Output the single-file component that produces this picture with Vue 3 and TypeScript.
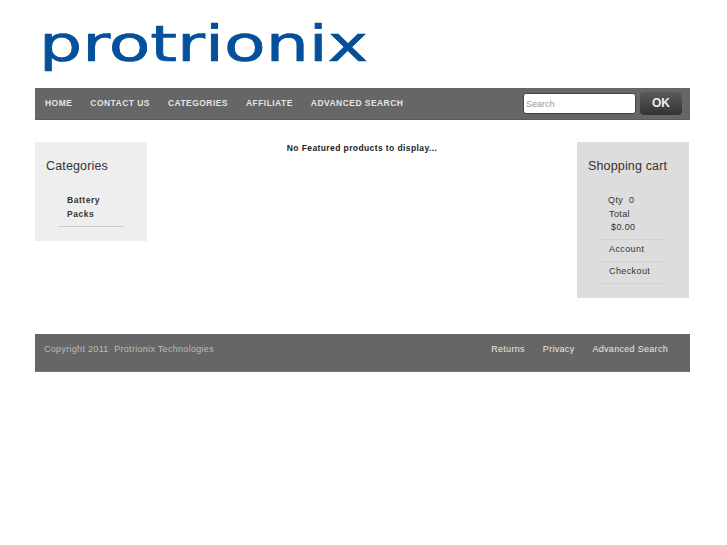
<script setup lang="ts">
const navLinks: string[] = ['HOME', 'CONTACT US', 'CATEGORIES', 'AFFILIATE', 'ADVANCED SEARCH']
const footerLinks: string[] = ['Returns', 'Privacy', 'Advanced Search']
</script>

<template>
  <div class="page">
    <header class="logo-row">
      <svg class="logo" width="345" height="60" viewBox="0 0 345 60" role="img" aria-label="protrionix">
        <text x="4" y="45" textLength="329" lengthAdjust="spacingAndGlyphs" class="logo-text">protrionix</text>
      </svg>
    </header>

    <nav class="nav">
      <ul class="nav-links">
        <li v-for="link in navLinks" :key="link">{{ link }}</li>
      </ul>
      <form class="search" @submit.prevent>
        <input class="search-input" type="text" placeholder="Search" />
        <button class="search-btn" type="submit">OK</button>
      </form>
    </nav>

    <main class="columns">
      <aside class="panel panel-left">
        <h2>Categories</h2>
        <ul class="cat-list">
          <li>Battery<br />Packs</li>
        </ul>
      </aside>
      <p class="empty">No Featured products to display...</p>
      <aside class="panel panel-right">
        <h2>Shopping cart</h2>
        <div class="cart-summary">
          <div class="qty">Qty&nbsp; 0</div>
          <div class="total">Total</div>
          <div class="amount">$0.00</div>
        </div>
        <ul class="cart-list">
          <li>Account</li>
          <li>Checkout</li>
        </ul>
      </aside>
    </main>

    <footer class="footer">
      <span class="copy">Copyright 2011&nbsp; Protrionix Technologies</span>
      <div class="footer-links">
        <span v-for="link in footerLinks" :key="link">{{ link }}</span>
      </div>
    </footer>
  </div>
</template>

<style>
html, body {
  background: #fff;
}
</style>

<style scoped>
.page {
  width: 655px;
  margin-left: 35px;
  font-family: "Liberation Sans", Arial, sans-serif;
  font-size: 10px;
  color: #333;
}
.logo-row {
  height: 88px;
  padding-top: 16px;
  box-sizing: border-box;
}
.logo {
  display: block;
}
.logo-text {
  font-family: "DejaVu Sans", sans-serif;
  font-size: 49px;
  fill: #04509a;
  stroke: #04509a;
  stroke-width: 0.7px;
}
.nav {
  height: 32px;
  background: #666;
  display: flex;
  align-items: center;
  justify-content: space-between;
  border-bottom: 1px solid #5c5c5c;
  box-sizing: border-box;
  padding: 0 8px 0 10px;
}
.nav-links {
  display: flex;
  gap: 18px;
  list-style: none;
  margin: 0;
  padding: 0 0 2px;
  color: #e4e4e4;
  font-size: 8.5px;
  font-weight: bold;
  letter-spacing: 0.45px;
}
.search {
  display: flex;
  align-items: center;
  gap: 4px;
}
.search-input {
  width: 113px;
  height: 21px;
  box-sizing: border-box;
  border: 1px solid #444;
  border-radius: 3px;
  background: #fff;
  padding: 0 2px;
  font-family: inherit;
  font-size: 9px;
  outline: none;
}
.search-input::placeholder {
  color: #999;
  opacity: 1;
}
.search-btn {
  width: 42px;
  height: 23px;
  border: none;
  border-radius: 4px;
  background: linear-gradient(#5a5a5a, #333);
  color: #eee;
  font-family: inherit;
  font-size: 12px;
  font-weight: bold;
  padding: 0 0 2px;
}
.columns {
  display: flex;
  align-items: flex-start;
  justify-content: space-between;
  margin-top: 22px;
  padding-right: 1px;
}
.panel {
  box-sizing: border-box;
  padding: 17px 11px 0;
}
.panel h2 {
  margin: 0;
  font-size: 12.5px;
  font-weight: normal;
  line-height: 15px;
  letter-spacing: 0.15px;
  color: #333;
}
.panel-left {
  width: 112px;
  height: 99px;
  background: #eee;
}
.panel-right {
  width: 112px;
  height: 156px;
  background: #ddd;
}
.cat-list {
  list-style: none;
  margin: 20px 12px 0 12px;
  padding: 0 0 5px 9px;
  border-bottom: 1px solid #ccc;
  font-size: 8.5px;
  font-weight: bold;
  line-height: 13.5px;
  letter-spacing: 0.55px;
}
.empty {
  flex: 1;
  margin: 0;
  padding-top: 1px;
  text-align: center;
  font-size: 8.5px;
  font-weight: bold;
  line-height: 10px;
  letter-spacing: 0.4px;
  color: #222;
}
.cart-summary {
  margin: 20px 11px 0 12px;
  padding: 0 0 4px 8px;
  border-bottom: 1px solid #d2d2d2;
  line-height: 13.5px;
  font-size: 9px;
  letter-spacing: 0.4px;
}
.cart-summary .total {
  margin-left: 1px;
}
.cart-summary .amount {
  margin-left: 3px;
}
.cart-list {
  list-style: none;
  margin: 0 11px 0 12px;
  padding: 0;
  font-size: 9px;
  letter-spacing: 0.4px;
}
.cart-list li {
  padding: 3px 0 6px 9px;
  line-height: 12px;
  border-bottom: 1px solid #d2d2d2;
}
.footer {
  height: 38px;
  margin-top: 36px;
  background: #666;
  box-sizing: border-box;
  border-bottom: 1px solid #777;
  padding: 0 22px 8px 9px;
  display: flex;
  align-items: center;
  justify-content: space-between;
  font-size: 9px;
  letter-spacing: 0.3px;
}
.copy {
  color: #bbb;
}
.footer-links {
  display: flex;
  gap: 18px;
  color: #e8e8e8;
}
</style>
